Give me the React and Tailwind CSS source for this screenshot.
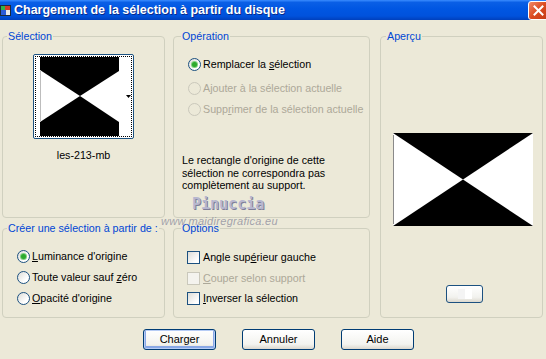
import React from 'react';

const Radio = ({ checked, disabled, children }) => (
  <div className="flex items-center h-[13px]">
    <span
      className={`w-[13px] h-[13px] shrink-0 rounded-full border flex items-center justify-center ${
        disabled
          ? 'border-[#CAC8BB] bg-[#ECE9D8]'
          : 'border-[#1C5180] bg-[linear-gradient(135deg,#DCDCD7,#FFFFFF_70%)]'
      }`}
    >
      {checked && <span className="w-[5px] h-[5px] rounded-full bg-[#2DAA2D] shadow-[0_0_0_1px_#7FD07F]" />}
    </span>
    <span className={`ml-[2px] leading-[13px] ${disabled ? 'text-[#ACA899]' : 'text-black'}`}>{children}</span>
  </div>
);

const Check = ({ disabled, children }) => (
  <div className="flex items-center h-[13px]">
    <span
      className={`w-[13px] h-[13px] shrink-0 border ${
        disabled
          ? 'border-[#CAC8BB] bg-[#F4F3EE]'
          : 'border-[#1C5180] bg-[linear-gradient(135deg,#DCDCD7,#FFFFFF_80%)]'
      }`}
    />
    <span className={`ml-[3px] leading-[13px] ${disabled ? 'text-[#ACA899]' : 'text-black'}`}>{children}</span>
  </div>
);

const Group = ({ title, className, legendClass, children }) => (
  <fieldset className={`border border-[#D0D0BF] rounded-[4px] ${className}`}>
    <legend className={`px-[1px] leading-[13px] text-[#0046D5] ${legendClass}`}>{title}</legend>
    {children}
  </fieldset>
);

const Button = ({ children, primary }) => (
  <button
    className={`w-[73px] h-[21px] rounded-[3px] border border-[#003C74] bg-[linear-gradient(#FFFFFF,#F3F3EF_75%,#DCD8CE)] text-[11px] leading-[13px] text-black ${
      primary ? 'shadow-[inset_0_0_0_1px_#B6CCF5,inset_0_-1px_0_2px_#8AA8E6]' : ''
    }`}
  >
    {children}
  </button>
);

export default function App() {
  return (
    <div className="w-[546px] h-[359px] overflow-hidden bg-[#ECE9D8] font-['Liberation_Sans',Arial,sans-serif] text-[10.7px] text-black">
      {/* title bar */}
      <div className="h-[20px] flex items-center bg-[linear-gradient(#3A8CFF_0%,#0A5FE6_12%,#0056E2_45%,#0052DC_80%,#0040BC_100%)]">
        <svg width="12" height="13" viewBox="0 0 12 13" className="mr-[2px]">
          <rect x="0" y="1" width="11" height="11" fill="#1B2A3A" />
          <rect x="1" y="2" width="4" height="4" fill="#2FB34A" />
          <rect x="5" y="2" width="5" height="4" fill="#D23A2A" />
          <rect x="1" y="6" width="5" height="5" fill="#2A5BD7" />
          <rect x="6" y="6" width="4" height="5" fill="#E8E8E8" />
        </svg>
        <span className="text-white font-bold text-[12.5px] leading-[16px] [text-shadow:1px_1px_0_#0A2A8A]">
          Chargement de la sélection à partir du disque
        </span>
        <div className="ml-auto -mr-[3px] w-[21px] h-[19px] rounded-[3px] border border-white bg-[linear-gradient(135deg,#F08A68,#DB4A20_50%,#C23A16)] flex items-center justify-center">
          <svg width="11" height="11" viewBox="0 0 11 11">
            <path d="M1.5 1.5 L9.5 9.5 M9.5 1.5 L1.5 9.5" stroke="white" strokeWidth="2" strokeLinecap="square" />
          </svg>
        </div>
      </div>

      {/* body */}
      <div className="relative pt-[10px] pl-[2px] flex">
        {/* left column */}
        <div className="w-[163px] flex flex-col">
          <Group title="Sélection" className="h-[188px]" legendClass="ml-[4px]">
            <div className="mx-auto mt-[11px] w-[101px] h-[85px] rounded-[2px] border border-[#1C5180] bg-white p-[1px]">
              <div className="w-full h-full border border-dotted border-black flex items-center pl-[4px]">
                <svg width="79" height="79" viewBox="0 0 79 79" className="self-start">
                  <rect width="79" height="79" fill="white" />
                  <polygon points="0,0 79,0 79,14 40,39 0,13" fill="black" />
                  <polygon points="0,65 40,39 79,65 79,79 0,79" fill="black" />
                  <rect x="0" y="13" width="1" height="52" fill="#BDBDBD" />
                </svg>
                <svg width="5" height="3" viewBox="0 0 5 3" className="ml-[7px]">
                  <polygon points="0,0 5,0 2.5,3" fill="black" />
                </svg>
              </div>
            </div>
            <div className="mt-[10px] text-center leading-[13px]">les-213-mb</div>
          </Group>
          <Group title="Créer une sélection à partir de :" className="mt-[4px] h-[96px]" legendClass="ml-[4px]">
            <div className="pl-[14px] pt-[15px] flex flex-col gap-[8px]">
              <Radio checked><u>L</u>uminance d'origine</Radio>
              <Radio>Toute valeur sauf <u>z</u>éro</Radio>
              <Radio><u>O</u>pacité d'origine</Radio>
            </div>
          </Group>
        </div>

        {/* middle column */}
        <div className="ml-[8px] w-[197px] flex flex-col">
          <Group title="Opération" className="h-[188px]" legendClass="ml-[7px]">
            <div className="pl-[14px] pt-[15px] flex flex-col">
              <Radio checked>Remplacer la <u>s</u>élection</Radio>
              <div className="mt-[11px]">
                <Radio disabled>Ajouter à la sélection actuelle</Radio>
              </div>
              <div className="mt-[8px]">
                <Radio disabled>Supp<u>r</u>imer de la sélection actuelle</Radio>
              </div>
            </div>
            <p className="pl-[8px] mt-[38px] leading-[12.5px]">
              Le rectangle d'origine de cette
              <br />
              sélection ne correspondra pas
              <br />
              complètement au support.
            </p>
          </Group>
          <Group title="Options" className="mt-[4px] h-[96px]" legendClass="ml-[7px]">
            <div className="pl-[13px] pt-[16px] flex flex-col gap-[7.5px]">
              <Check>Angle sup<u>é</u>rieur gauche</Check>
              <Check disabled><u>C</u>ouper selon support</Check>
              <Check><u>I</u>nverser la sélection</Check>
            </div>
          </Group>
        </div>

        {/* right column */}
        <div className="ml-[10px] w-[163px]">
          <Group title="Aperçu" className="h-[288px]" legendClass="ml-[5px]">
            <div className="flex flex-col">
              <svg width="140" height="93" viewBox="0 0 140 93" className="ml-[12px] mt-[90px]">
                <rect width="140" height="93" fill="white" />
                <polygon points="0,0 140,0 70,46.5" fill="black" />
                <polygon points="0,93 140,93 70,46.5" fill="black" />
                <rect x="0" y="2" width="1" height="89" fill="#8A8A8A" />
              </svg>
              <div className="ml-[65px] mt-[59px] w-[37px] h-[18px] rounded-[3px] border border-[#1C5180] bg-[linear-gradient(#FFFFFF,#F2F2EE_70%,#DCD8CE)] flex items-center justify-center">
                <div className="w-[14px] h-[10px] bg-[linear-gradient(90deg,#F4F4F4_50%,#FFFFFF_50%)]" />
              </div>
            </div>
          </Group>
        </div>

        {/* watermark overlay */}
        <div className="absolute left-[192px] top-[176px] text-[15px] leading-[16px] font-bold text-[#B7B7CF] [text-shadow:1px_1px_0_#7E7E98] font-['DejaVu_Sans_Mono',monospace]">
          Pinuccia
        </div>
        <div className="absolute left-[161px] top-[195px] text-[11px] leading-[12px] italic tracking-[0.3px] text-[#8E8E9E]/80 font-['Liberation_Sans',sans-serif]">
          www.maidiregrafica.eu
        </div>
      </div>

      {/* buttons */}
      <div className="mt-[11px] pl-[143px] flex gap-[26px]">
        <Button primary>Charger</Button>
        <Button>Annuler</Button>
        <Button>Aide</Button>
      </div>
    </div>
  );
}
